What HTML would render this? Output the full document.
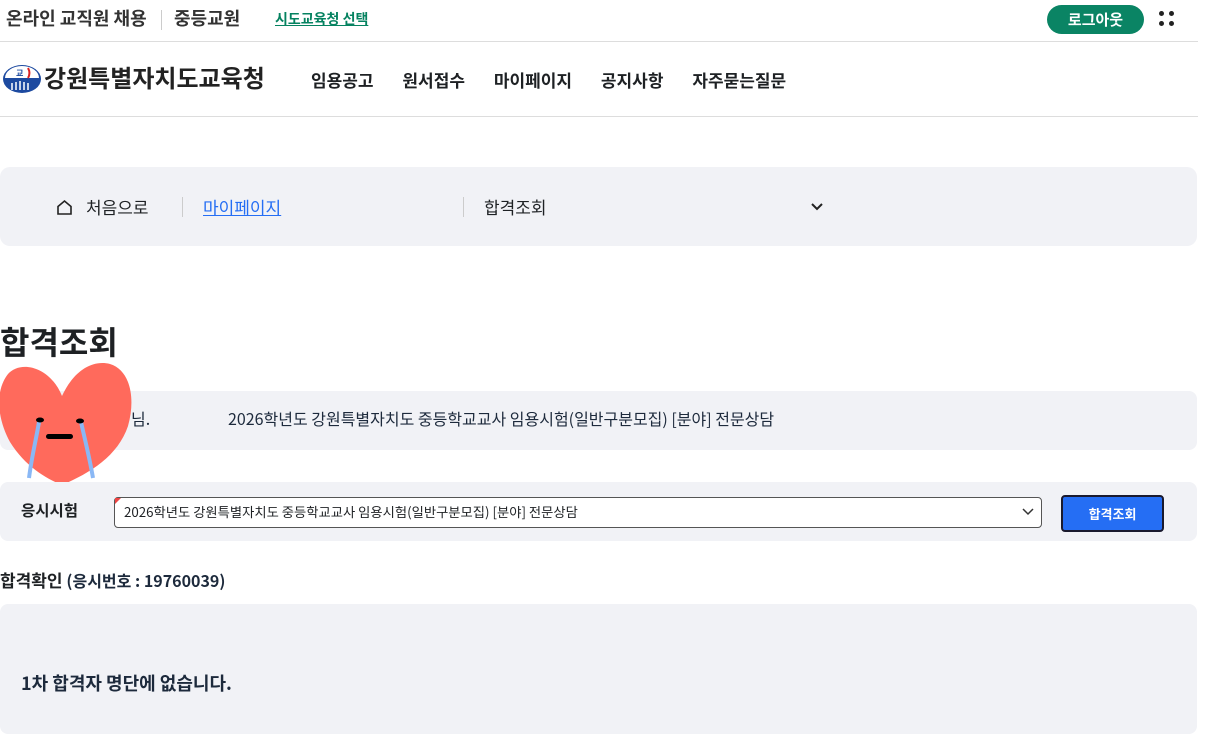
<!DOCTYPE html>
<html><head><meta charset="utf-8"><style>
*{margin:0;padding:0;box-sizing:border-box}
body{width:1212px;height:726px;overflow:hidden;background:#fff;font-family:"Noto Sans CJK KR","Liberation Sans",sans-serif;color:#1e2124;position:relative;line-height:1.3}
.a{position:absolute;white-space:nowrap}
.box{position:absolute;left:0;width:1197px;background:#f1f2f6;border-radius:8px}
</style></head><body>
<div class="a" style="left:6px;top:7px;font-size:18px;font-weight:700;color:#333">온라인 교직원 채용</div>
<div class="a" style="left:161px;top:10px;width:1px;height:20px;background:#ccc"></div>
<div class="a" style="left:174px;top:7px;font-size:18px;font-weight:700;color:#333">중등교원</div>
<div class="a" style="left:275px;top:10px;font-size:14px;font-weight:700;color:#058260;text-decoration:underline">시도교육청 선택</div>
<div class="a" style="left:1047px;top:5px;width:97px;height:29px;border-radius:15px;background:#0a8464;color:#fff;font-size:15px;font-weight:700;text-align:center;line-height:29px">로그아웃</div>
<div class="a" style="left:1159px;top:11px;width:16px;height:16px">
<span class="a" style="left:0;top:0;width:5px;height:5px;border-radius:50%;background:#222"></span><span class="a" style="left:10px;top:0;width:5px;height:5px;border-radius:50%;background:#222"></span><span class="a" style="left:0;top:10px;width:5px;height:5px;border-radius:50%;background:#222"></span><span class="a" style="left:10px;top:10px;width:5px;height:5px;border-radius:50%;background:#222"></span></div>
<div class="a" style="left:0;top:41px;width:1198px;height:1px;background:#ddd"></div>
<svg class="a" style="left:2px;top:64px" width="40" height="30" viewBox="0 0 40 30"><ellipse cx="20" cy="15" rx="19" ry="14" fill="#1d4aa0"/><path d="M3 14 A17 12 0 0 1 37 14 Z" fill="#fff"/><path d="M26 4 A10 10 0 0 1 26 14" stroke="#d22" stroke-width="2" fill="none"/><text x="14" y="12" font-size="8" fill="#1d4aa0" font-weight="700">교</text><path d="M10 26v-7M14 26v-8M18 26v-9M22 26v-8M26 26v-7" stroke="#fff" stroke-width="1.5"/></svg>
<div class="a" style="left:44px;top:61px;font-size:24px;font-weight:700;color:#222">강원특별자치도교육청</div>
<div class="a" style="left:311px;top:69px;font-size:17px;font-weight:700;word-spacing:25px">임용공고 원서접수 마이페이지 공지사항 자주묻는질문</div>
<div class="a" style="left:0;top:116px;width:1198px;height:1px;background:#ddd"></div>
<div class="box" style="top:167px;height:79px;border-radius:10px"></div>
<svg class="a" style="left:56px;top:199px" width="17" height="17" viewBox="0 0 17 17"><path d="M2 7.5L8.5 2 15 7.5V15H2Z" fill="none" stroke="#222" stroke-width="1.6"/></svg>
<div class="a" style="left:86px;top:196px;font-size:17px">처음으로</div>
<div class="a" style="left:182px;top:197px;width:1px;height:20px;background:#ccc"></div>
<div class="a" style="left:203px;top:196px;font-size:17px;color:#256ef4;text-decoration:underline">마이페이지</div>
<div class="a" style="left:463px;top:197px;width:1px;height:20px;background:#ccc"></div>
<div class="a" style="left:484px;top:196px;font-size:17px">합격조회</div>
<svg class="a" style="left:811px;top:202px" width="12" height="10"><path d="M1 2l5 5 5-5" fill="none" stroke="#222" stroke-width="2"/></svg>
<div class="a" style="left:0;top:321px;font-size:32px;font-weight:700">합격조회</div>
<div class="box" style="top:391px;height:59px"></div>
<div class="a" style="left:131px;top:408px;font-size:16px;color:#1d2a3c">님.</div>
<div class="a" style="left:228px;top:408px;font-size:16px;color:#1d2a3c">2026학년도 강원특별자치도 중등학교교사 임용시험(일반구분모집) [분야] 전문상담</div>
<svg class="a" style="left:0;top:360px" width="134" height="126" viewBox="0 0 134 126"><path d="M62 36 C50 6 20 0 8 14 C-6 32 -2 60 10 82 C25 106 45 118 62 125 C90 113 118 96 128 66 C136 38 130 10 110 4 C90 -1 72 14 62 36Z" fill="#ff6a5c"/><path d="M81 62 C85 80 89 95 93 118" stroke="#8ab8f5" stroke-width="4" fill="none"/><path d="M39 62 C36 80 32 95 29 118" stroke="#8ab8f5" stroke-width="4" fill="none"/><ellipse cx="40" cy="60" rx="4" ry="2.5"/><ellipse cx="80" cy="61" rx="4" ry="2.5"/><rect x="46" y="74" width="27" height="5" rx="2.5"/></svg>
<div class="box" style="top:482px;height:59px"></div>
<div class="a" style="left:21px;top:500px;font-size:15.5px;font-weight:700">응시시험</div>
<div class="a" style="left:114px;top:497px;width:928px;height:31px;background:#fff;border:1px solid #555;border-radius:4px"></div>
<div class="a" style="left:115px;top:498px;width:0;height:0;border-top:6px solid #e44;border-right:6px solid transparent"></div>
<div class="a" style="left:124px;top:503px;font-size:13.3px">2026학년도 강원특별자치도 중등학교교사 임용시험(일반구분모집) [분야] 전문상담</div>
<svg class="a" style="left:1022px;top:507px" width="12" height="10"><path d="M1 2l5 5 5-5" fill="none" stroke="#333" stroke-width="1.5"/></svg>
<div class="a" style="left:1061px;top:495px;width:103px;height:37px;background:#256ef4;border:2px solid #1a1a2e;border-radius:4px;color:#fff;font-size:13px;font-weight:700;text-align:center;line-height:33px">합격조회</div>
<div class="a" style="left:0;top:569px;font-size:17px;font-weight:700">합격확인 <span style="font-size:16px;color:#1d2a3c">(응시번호 : 19760039)</span></div>
<div class="box" style="top:604px;height:130px"></div>
<div class="a" style="left:21px;top:672px;font-size:18px;font-weight:700;color:#1d2a3c">1차 합격자 명단에 없습니다.</div>
</body></html>
